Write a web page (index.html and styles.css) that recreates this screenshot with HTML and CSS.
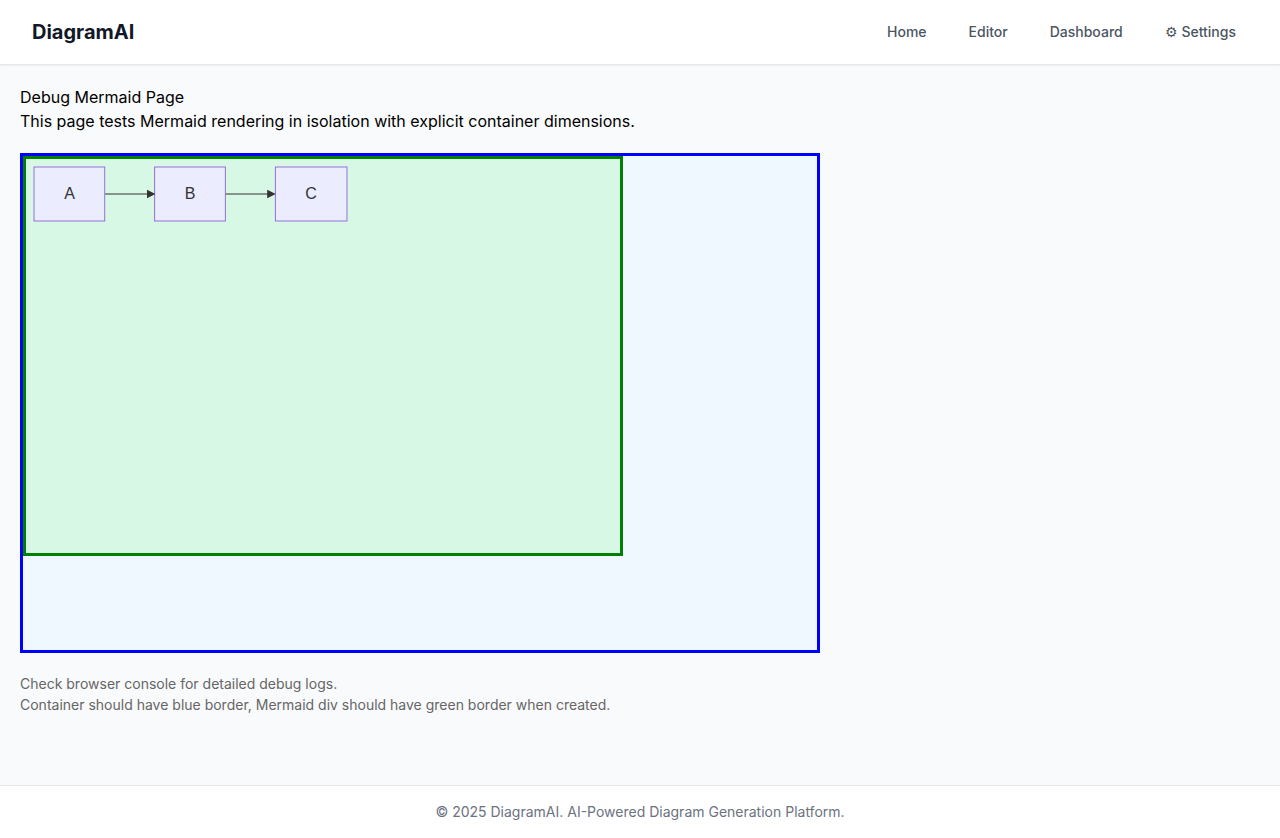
FILE: index.html
```html
<!DOCTYPE html>
<html lang="en">
<head>
<meta charset="utf-8">
<meta name="viewport" content="width=device-width, initial-scale=1">
<title>DiagramAI</title>
<link rel="stylesheet" href="styles.css">
</head>
<body>
<header class="site-header">
  <a class="brand" href="#">DiagramAI</a>
  <nav class="nav">
    <a class="nav-link" href="#">Home</a>
    <a class="nav-link" href="#">Editor</a>
    <a class="nav-link" href="#">Dashboard</a>
    <a class="nav-link" href="#">⚙ Settings</a>
  </nav>
</header>
<main class="page">
  <h1 class="title">Debug Mermaid Page</h1>
  <p class="intro">This page tests Mermaid rendering in isolation with explicit container dimensions.</p>
  <div class="container">
    <div class="mermaid">
      <svg class="chart" viewBox="0 0 330 71" width="330" height="71" role="img" aria-label="A to B to C">
        <g class="node">
          <rect x="8" y="8" width="70.7" height="54"/>
          <rect x="128.6" y="8" width="70.8" height="54"/>
          <rect x="249.4" y="8" width="71.6" height="54"/>
        </g>
        <g class="edge">
          <path d="M79.2 35H123"/>
          <path d="M199.9 35H244"/>
        </g>
        <g class="arrow">
          <path d="M121 30.8L129.4 35L121 39.2z"/>
          <path d="M241.2 30.8L249.8 35L241.2 39.2z"/>
        </g>
        <g class="label">
          <text x="43.5" y="40">A</text>
          <text x="164" y="40">B</text>
          <text x="285" y="40">C</text>
        </g>
      </svg>
    </div>
  </div>
  <div class="notes">
    <p>Check browser console for detailed debug logs.</p>
    <p>Container should have blue border, Mermaid div should have green border when created.</p>
  </div>
</main>
<footer class="site-footer">
  <p>© 2025 DiagramAI. AI-Powered Diagram Generation Platform.</p>
</footer>
</body>
</html>
```
FILE: styles.css
```css
* { box-sizing: border-box; margin: 0; padding: 0; }
body {
  min-height: 100vh;
  display: flex;
  flex-direction: column;
  background: #f9fafb;
  color: #000;
  font: 16px/24px Inter, "Liberation Sans", sans-serif;
}
.site-header {
  display: flex;
  align-items: center;
  justify-content: space-between;
  padding: 14px 32px;
  background: #fff;
  border-bottom: 1px solid #e5e7eb;
  box-shadow: 0 1px 2px rgba(0, 0, 0, 0.05);
}
.brand {
  color: #111827;
  font-size: 20px;
  font-weight: 700;
  line-height: 28px;
  text-decoration: none;
}
.nav { display: flex; gap: 18px; }
.nav-link {
  padding: 8px 12px;
  color: #4b5563;
  font-size: 14px;
  font-weight: 500;
  line-height: 20px;
  text-decoration: none;
}
.page { flex: 1; padding: 20px; }
.title { font-size: 16px; font-weight: 400; line-height: 24px; }
.container {
  max-width: 800px;
  height: 500px;
  margin: 20px 0;
  background: #f0f8ff;
  border: 3px solid #00f;
}
.mermaid {
  max-width: 600px;
  height: 400px;
  background: #d8f8e6;
  border: 3px solid #008000;
}
.chart { display: block; }
.edge { fill: none; stroke: #333; stroke-width: 1; }
.arrow { fill: #333; }
.node { fill: #ececff; stroke: #9370db; stroke-width: 1; }
.label {
  fill: #333;
  font: 16px "Liberation Sans", sans-serif;
  text-anchor: middle;
}
.notes { color: #666; font-size: 14px; line-height: 21px; }
.site-footer {
  padding: 16px;
  background: #fff;
  border-top: 1px solid #e5e7eb;
  color: #6b7280;
  font-size: 14px;
  line-height: 20px;
  text-align: center;
}
```
